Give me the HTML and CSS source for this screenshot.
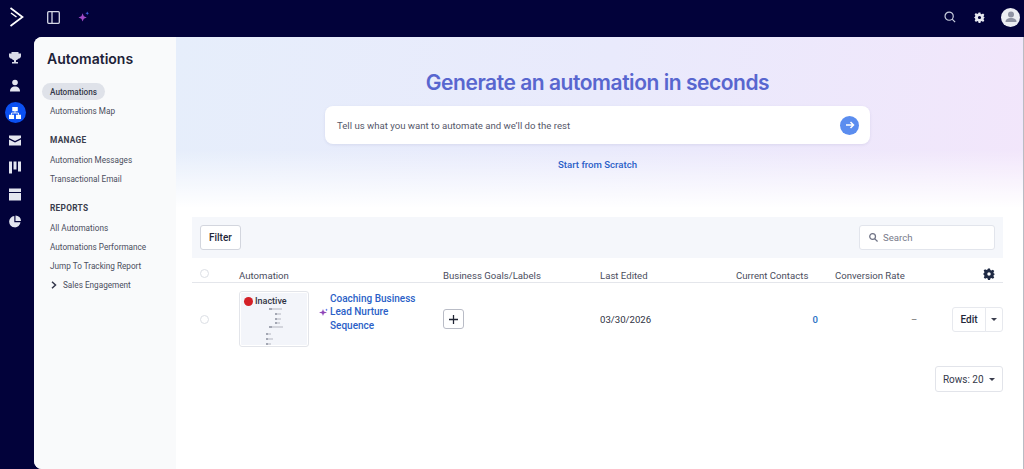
FILE: index.html
```html
<!DOCTYPE html>
<html lang="en">
<head>
<meta charset="utf-8">
<title>Automations</title>
<link rel="stylesheet" href="styles.css">
</head>
<body>
<header class="topbar">
  <div class="top-left">
    <svg class="logo" width="15" height="20" viewBox="0 0 15 20"><path d="M1.500 1L13.500 10 1.500 19" fill="none" stroke="#fff" stroke-width="1.700"/><path d="M2 6L7.500 10" fill="none" stroke="#fff" stroke-width="1.500"/></svg>
    <svg class="panel-icon" width="13" height="13" viewBox="0 0 13 13"><rect x=".7" y=".7" width="11.600" height="11.600" rx="1" fill="none" stroke="#d5d8e6" stroke-width="1.300"/><path d="M5 1v11" stroke="#d5d8e6" stroke-width="1.300"/></svg>
    <svg class="spark" width="12" height="12" viewBox="0 0 13 13"><path d="M5 2.500l1.300 3.200L9.500 7 6.300 8.300 5 11.500 3.700 8.300.5 7l3.200-1.300z" fill="#a24bc8"/><path d="M10 .5l.6 1.400 1.400.6-1.400.6-.6 1.400-.6-1.400L8 2.500l1.400-.6z" fill="#3f66e8"/></svg>
  </div>
  <div class="top-right">
    <svg class="top-search" width="12" height="12" viewBox="0 0 14 14"><circle cx="6" cy="6" r="4.800" fill="none" stroke="#c9cede" stroke-width="1.400"/><path d="M9.500 9.500L13 13" stroke="#c9cede" stroke-width="1.400"/></svg>
    <svg width="11" height="11" viewBox="0 0 24 24"><path fill="#e6e8f0" fill-rule="evenodd" d="M10 1h4l.7 3.200 2.200.9 2.800-1.700 2.800 2.800-1.700 2.800.9 2.200L24 12l-2.300 1.800-.9 2.200 1.700 2.800-2.800 2.800-2.800-1.700-2.200.9L14 24h-4l-.7-3.200-2.200-.9-2.800 1.700-2.800-2.800L3 16l-.9-2.200L0 12l2.100-1.800.9-2.200-1.700-2.800 2.800-2.800 2.800 1.700 2.200-.9zM12 8.500a3.500 3.500 0 100 7 3.500 3.500 0 000-7z"/></svg>
    <span class="avatar"><svg width="18" height="18" viewBox="0 0 18 18"><circle cx="9" cy="6.500" r="3" fill="#8f93a3"/><path d="M3.500 14c0-3 2.500-4 5.500-4s5.500 1 5.500 4z" fill="#8f93a3"/></svg></span>
  </div>
</header>

<div class="shell">
  <nav class="rail">
    <svg width="12" height="13" viewBox="0 0 12 13"><path fill="#d9dbe8" d="M2.500 0h7v1.500H12V4c0 1.500-1 2.500-2.800 2.800C8.700 7.700 8 8 7 8.200V10h2v1.500H3V10h2V8.200C4 8 3.300 7.700 2.800 6.800 1 6.500 0 5.500 0 4V1.500h2.500z"/></svg>
    <svg width="12" height="12" viewBox="0 0 12 12"><circle cx="6" cy="3" r="2.800" fill="#e3e5ef"/><path d="M1 12c0-3.500 2-5 5-5s5 1.500 5 5z" fill="#e3e5ef"/></svg>
    <span class="rail-active"><svg width="12" height="12" viewBox="0 0 13 13"><path fill="#fff" d="M3.500 0h6v4.500h-6zM0 8.500h5.500V13H0zM7.500 8.500H13V13H7.500z"/><path fill="none" stroke="#fff" d="M6.500 4.500v2M2.700 8.500v-2h7.600v2"/></svg></span>
    <svg width="12" height="10" viewBox="0 0 12 10"><path fill="#e3e5ef" d="M0 0h12v2.500L6 5.500 0 2.500zM0 4l6 3 6-3v6H0z"/></svg>
    <svg width="12" height="11" viewBox="0 0 12 12"><path fill="#e3e5ef" d="M0 0h3v12H0zM4.500 0h3v8h-3zM9 0h3v10H9z"/></svg>
    <svg width="12" height="11" viewBox="0 0 12 12"><path fill="#e3e5ef" d="M0 0h12v3.500H0zM0 4.500h12V12H0z"/></svg>
    <svg width="12" height="11" viewBox="0 0 12 12"><path fill="#e3e5ef" d="M5.300.5v6.200h6.200A5.700 5.700 0 115.300.5zM6.500 0A5.500 5.500 0 0112 5.500H6.500z"/></svg>
  </nav>

  <div class="panel">
    <aside class="sidebar">
      <h1 class="side-title">Automations</h1>
      <a class="side-link side-active">Automations</a>
      <a class="side-link">Automations Map</a>
      <h2 class="side-head">MANAGE</h2>
      <a class="side-link">Automation Messages</a>
      <a class="side-link">Transactional Email</a>
      <h2 class="side-head">REPORTS</h2>
      <a class="side-link">All Automations</a>
      <a class="side-link">Automations Performance</a>
      <a class="side-link">Jump To Tracking Report</a>
      <a class="side-link side-exp"><svg width="6" height="8" viewBox="0 0 6 8"><path d="M1 .8L4.500 4 1 7.200" fill="none" stroke="#33364a" stroke-width="1.500"/></svg>Sales Engagement</a>
    </aside>

    <main class="main">
      <section class="hero">
        <h2 class="hero-title">Generate an automation in seconds</h2>
        <div class="prompt">
          <span>Tell us what you want to automate and we’ll do the rest</span>
          <span class="send"><svg width="10" height="10" viewBox="0 0 10 10"><path d="M1 5h7.500M5.500 2l3 3-3 3" fill="none" stroke="#fff" stroke-width="1.500"/></svg></span>
        </div>
        <a class="scratch">Start from Scratch</a>
      </section>

      <section class="content">
        <div class="toolbar">
          <button class="btn">Filter</button>
          <div class="search">
            <svg width="9" height="9" viewBox="0 0 10 10"><circle cx="4" cy="4" r="3.200" fill="none" stroke="#6f7385" stroke-width="1.400"/><path d="M6.500 6.500L9.500 9.500" stroke="#6f7385" stroke-width="1.400"/></svg>
            <span>Search</span>
          </div>
        </div>

        <div class="grid grid-head">
          <span class="check"></span>
          <span>Automation</span>
          <span>Business Goals/Labels</span>
          <span>Last Edited</span>
          <span>Current Contacts</span>
          <span>Conversion Rate</span>
          <svg class="gear" width="12" height="12" viewBox="0 0 24 24"><path fill="#1f2a44" fill-rule="evenodd" d="M10 1h4l.7 3.200 2.200.9 2.800-1.700 2.800 2.800-1.700 2.800.9 2.200L24 12l-2.300 1.800-.9 2.200 1.700 2.800-2.800 2.800-2.800-1.700-2.200.9L14 24h-4l-.7-3.200-2.200-.9-2.800 1.700-2.800-2.800L3 16l-.9-2.200L0 12l2.100-1.800.9-2.200-1.700-2.800 2.800-2.800 2.800 1.700 2.200-.9zM12 8.500a3.500 3.500 0 100 7 3.500 3.500 0 000-7z"/></svg>
        </div>

        <div class="grid grid-row">
          <span class="check"></span>
          <div class="auto-cell">
            <div class="thumb">
              <div class="status"><i class="dot"></i>Inactive</div>
              <svg class="flow" width="24" height="38" viewBox="0 0 24 38"><path d="M6 1h10M11 6h4M11 11h4M11 15h3M6 19h11M2 26h3M2 31h5M2 36h3" stroke="#b3b5bf" stroke-width="1" fill="none"/><path d="M3 1h3M9 6h2M9 11h2M9 15h2M3 19h3M0 26h2M0 31h2M0 36h2" stroke="#555a6c" stroke-width="1.200" fill="none"/></svg>
            </div>
            <svg class="row-spark" width="9" height="9" viewBox="0 0 9 9"><path d="M4 1l.9 2.600L8 4.500l-3.100.9L4 8 3.100 5.400 0 4.500l3.100-.9z" fill="#8e44b8"/><path d="M7.500 .5l.4 1 1 .4-1 .4-.4 1-.4-1-1-.4 1-.4z" fill="#3f66e8"/></svg>
            <a class="auto-name">Coaching Business Lead Nurture Sequence</a>
          </div>
          <div><button class="btn plus"><svg width="9" height="9" viewBox="0 0 10 10"><path d="M5 0v10M0 5h10" stroke="#1f2433" stroke-width="1.400"/></svg></button></div>
          <span class="date">03/30/2026</span>
          <span class="contacts">0</span>
          <span class="rate">–</span>
          <div class="edit-group"><button class="edit">Edit</button><button class="edit-caret"><i class="caret"></i></button></div>
        </div>

        <div class="pager"><button class="btn rows">Rows: 20 <i class="caret"></i></button></div>
      </section>
    </main>
  </div>
</div>
</body>
</html>
```

FILE: styles.css
```css
* { box-sizing: border-box; }
html, body { margin: 0; height: 100%; overflow: hidden; }
body {
  background: #02023a;
  font-family: Roboto, "Noto Sans", sans-serif;
  color: #2b2e3f;
  height: 469px;
  display: flex;
  flex-direction: column;
}
button { font-family: inherit; cursor: pointer; }

.topbar {
  height: 37px;
  flex: none;
  display: flex;
  justify-content: space-between;
  align-items: center;
  padding: 0 4px 3px 9px;
}
.top-left { display: flex; align-items: center; }
.logo { margin-right: 23px; }
.panel-icon { margin-right: 18px; }
.top-right { display: flex; align-items: center; gap: 16px; }
.top-search { margin-right: 2px; }
.avatar {
  width: 19px; height: 19px; border-radius: 50%;
  background: #eceef3;
  display: flex; align-items: center; justify-content: center;
}

.shell { flex: 1; display: flex; min-height: 0; }
.rail {
  width: 34px; flex: none;
  display: flex; flex-direction: column; align-items: center;
  padding-top: 15px;
  padding-right: 4px;
}
.rail > svg { height: 13px; margin-bottom: 14px; }
.rail > svg:nth-child(2) { margin-bottom: 10px; }
.rail-active {
  width: 21px; height: 21px; border-radius: 50%;
  background: #0b50f2;
  display: flex; align-items: center; justify-content: center;
  margin-bottom: 11px;
}
.panel {
  flex: 1; display: flex;
  background: #fff;
  border-radius: 8px 0 0 8px;
  overflow: hidden;
  border-right: 1px solid #b9bcc4;
  min-width: 0;
}
.sidebar {
  width: 142px; flex: none;
  background: #f9fafb;
  padding: 13px 8px 0;
  display: flex; flex-direction: column; align-items: flex-start;
}
.side-title {
  font-size: 14px; font-weight: 600; line-height: 18px;
  margin: 0 0 15px 5px; color: #1d2238;
  font-family: Inter, sans-serif;
}
.side-link {
  font-size: 8.200px; line-height: 12px; color: #4a4d5d;
  padding: 0 8px;
  height: 19px; display: flex; align-items: center;
  white-space: nowrap;
}
.side-active {
  background: #dfe2e9; border-radius: 9px; height: 17px;
  font-weight: 500; color: #34384a; margin-bottom: 1px;
}
.side-head {
  font-size: 8.300px; font-weight: 700; line-height: 12px;
  margin: 14px 0 4px 8px; color: #3a3d4d; letter-spacing: .3px;
}
.side-exp svg { margin-right: 6px; margin-left: 1px; }

.main { flex: 1; min-width: 0; display: flex; flex-direction: column; }
.hero {
  height: 171px; flex: none;
  background:
    linear-gradient(to bottom, rgba(255,255,255,0) 66%, #fff 100%),
    linear-gradient(100deg, #e6eefb 0%, #e9eafc 50%, #f2e6fb 100%);
  display: flex; flex-direction: column; align-items: center;
  padding: 33px 4px 0 0;
}
.hero-title {
  font-family: Inter, sans-serif;
  font-size: 21px; font-weight: 600; line-height: 26px;
  margin: 0 0 10px; color: #5866cf; letter-spacing: -.46px;
}
.prompt {
  width: 545px; height: 38px;
  background: #fff; border-radius: 8px;
  display: flex; align-items: center; justify-content: space-between;
  padding: 0 11px 0 12px;
  font-size: 9.600px; color: #55586a;
  box-shadow: 0 1px 3px rgba(90,90,150,.12);
}
.send {
  width: 19px; height: 19px; border-radius: 50%;
  background: #5b8def;
  display: flex; align-items: center; justify-content: center;
}
.scratch {
  margin-top: 14px;
  font-size: 9.600px; font-weight: 500; color: #2b5fc7; line-height: 14px;
}

.content { padding: 9px 20px 0 16px; }
.toolbar {
  height: 41px;
  background: #f5f7fb;
  display: flex; align-items: center; justify-content: space-between;
  padding: 0 8px;
}
.btn {
  background: #fff;
  border: 1px solid #d3d6de;
  border-radius: 3px;
  font-size: 10px; font-weight: 500; color: #23273a;
  height: 25px; padding: 0 8px;
}
.search {
  width: 136px; height: 25px;
  background: #fff; border: 1px solid #e2e5ec; border-radius: 3px;
  display: flex; align-items: center; gap: 5px;
  padding: 0 9px;
  font-size: 9.600px; color: #777a8a;
}

.grid {
  display: grid;
  grid-template-columns: 47px 204px 157px 136px 99px 97px 1fr;
}
.grid-head {
  height: 25px; align-items: center;
  border-bottom: 1px solid #e4e6eb;
  font-size: 9.600px; color: #4a4d5d;
  position: relative;
  padding-top: 10px;
}
.grid-head .check { margin-top: -3px; }
.gear { position: absolute; right: 8px; top: 10px; }
.check {
  width: 9px; height: 9px; margin-left: 8px;
  border: 1px solid #dcdfe5; border-radius: 50%;
  background: #fff;
}
.grid-row { height: 72px; align-items: center; font-size: 9.600px; }
.auto-cell { display: flex; align-items: center; }
.thumb {
  width: 70px; height: 56px;
  background: #f3f5fa;
  border: 2px solid #fff;
  outline: 1px solid #e3e5ea; outline-offset: -1px;
  border-radius: 3px;
  padding: 2px;
  position: relative;
  overflow: hidden;
  flex: none;
}
.status {
  display: flex; align-items: center; gap: 2px;
  font-size: 9px; font-weight: 500; color: #2f3242;
  line-height: 12px;
  margin-left: 1px;
}
.dot { width: 9px; height: 9px; background: #d42027; border-radius: 50%; }
.flow { position: absolute; left: 25px; top: 15px; }
.row-spark { margin: 0 2px 14px 10px; flex: none; }
.auto-name {
  width: 90px; margin-bottom: 14px;
  font-size: 10px; font-weight: 500; color: #2b5fc7; line-height: 13.500px;
}
.plus { width: 21px; height: 20px; padding: 0; display: flex; align-items: center; justify-content: center; border-color: #b9bcc6; }
.date { color: #2f3242; }
.contacts { color: #1f6fc4; font-weight: 500; text-align: right; padding-right: 17px; }
.rate { padding-left: 76px; color: #666; }
.edit-group { display: flex; justify-content: flex-end; }
.edit-group button {
  height: 25px; background: #fff;
  border: 1px solid #e7e9ee;
  font-size: 10px; font-weight: 500; color: #23273a;
}
.edit { width: 34px; padding: 0; border-radius: 3px 0 0 3px; }
.edit-group .edit-caret { width: 18px; padding: 0; border-radius: 0 3px 3px 0; margin-left: -1px; }
.caret {
  display: inline-block;
  border: 3px solid transparent; border-top: 3px solid #3a3d4d; border-bottom: 0;
  vertical-align: middle;
}
.pager { display: flex; justify-content: flex-end; margin-top: 11px; }
.rows { width: 68px; height: 26px; font-weight: 400; color: #34384a; padding: 0; border-color: #e2e4ea; }
.rows .caret { margin-left: 3px; }
```
